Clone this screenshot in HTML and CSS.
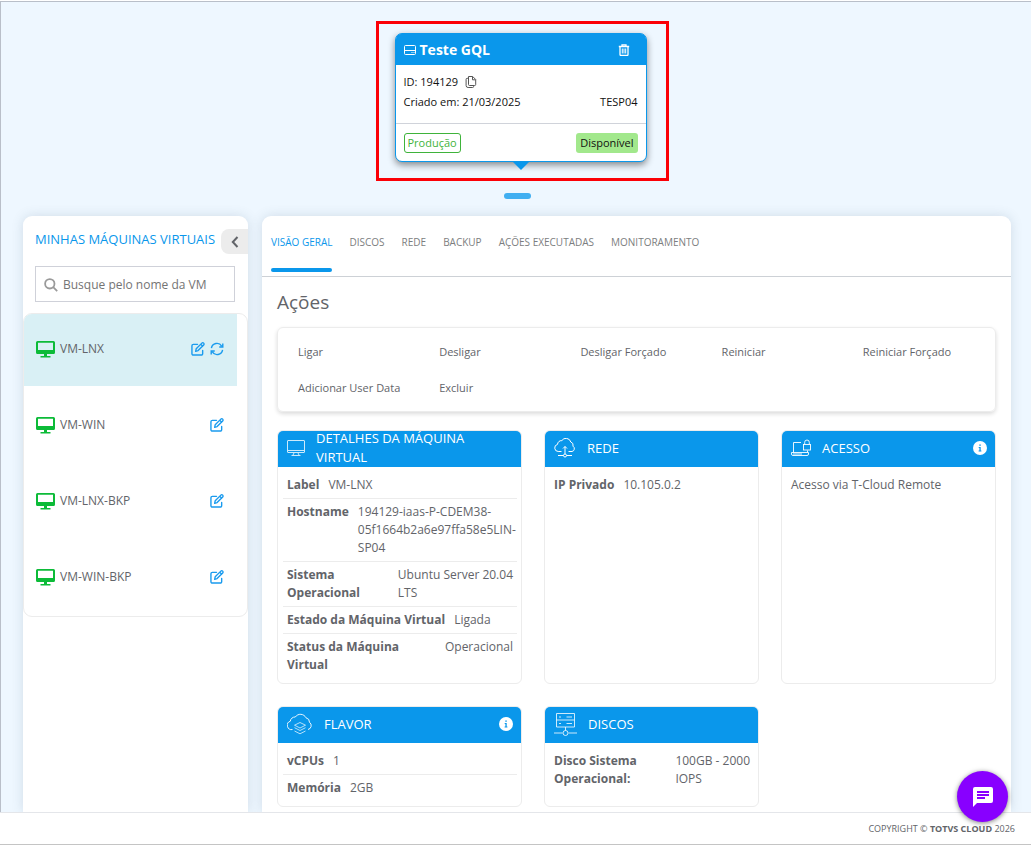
FILE: index.html
```html
<!DOCTYPE html>
<html lang="pt-BR">
<head>
<meta charset="utf-8">
<meta name="viewport" content="width=device-width, initial-scale=1">
<title>TOTVS Cloud</title>
<link rel="stylesheet" href="styles.css">
</head>
<body>
<svg class="defs" aria-hidden="true">
  <symbol id="monitor" viewBox="0 0 19 17"><path fill="currentColor" fill-rule="evenodd" d="M1.5 0h16A1.500 1.500 0 0 1 19 1.500v10a1.500 1.500 0 0 1-1.500 1.500H11v2h3.500v1.500h-10V15H8v-2H1.500A1.500 1.500 0 0 1 0 11.500v-10A1.500 1.500 0 0 1 1.500 0zM2 1.800v7.200h15V1.800z"/></symbol>
  <symbol id="edit" viewBox="0 0 15 15"><path fill="none" stroke="currentColor" stroke-width="1.500" stroke-linecap="round" stroke-linejoin="round" d="M7 2.500H2.500a1.500 1.500 0 0 0-1.500 1.500v8.500A1.500 1.500 0 0 0 2.500 14H11a1.500 1.500 0 0 0 1.500-1.500V9M5 10l.6-2.800 6-6a1.300 1.300 0 0 1 2 2l-6 6zM10.500 2.500l2 2"/></symbol>
  <symbol id="info" viewBox="0 0 14 14"><circle cx="7" cy="7" r="7" fill="#fff"/><path fill="#0a97eb" d="M6.300 3.500h1.500v1.300H6.300zM5.700 6h2v3.400h.7v1H5.600v-1h.8V7h-.7z"/></symbol>
</svg>
<main class="page">
  <section class="hero">
    <div class="highlight">
      <article class="project">
        <header class="project-head">
          <svg class="i12" viewBox="0 0 12 12" fill="none" stroke="currentColor"><rect x=".5" y="1.500" width="11" height="9" rx="1"/><path d="M.5 6.500h11M7.500 8.500h1M9.500 8.500h1"/></svg>
          <h1>Teste GQL</h1>
          <button class="icon-btn trash" aria-label="Excluir projeto"><svg class="i12" viewBox="0 0 12 12" fill="none" stroke="currentColor"><path stroke-width="1.300" d="M.8 2.500h10.400M4 2.300V.8h4v1.500M2 2.700v7.800a1 1 0 0 0 1 1h6a1 1 0 0 0 1-1V2.700"/><path d="M4.300 4.500v5M6 4.500v5M7.700 4.500v5"/></svg></button>
        </header>
        <div class="project-body">
          <div class="line"><span>ID: 194129</span><button class="icon-btn copy" aria-label="Copiar ID"><svg class="i12" viewBox="0 0 12 12" fill="none" stroke="currentColor"><path d="M3.500.5h4.200l3 3v5a1 1 0 0 1-1 1H4.500a1 1 0 0 1-1-1zM7.500.8v3h3M3.300 2.300H2.100a1 1 0 0 0-1 1v6.200a2 2 0 0 0 2 2h4.500a1 1 0 0 0 1-1v-.8"/></svg></button></div>
          <div class="line spread"><span>Criado em: 21/03/2025</span><span>TESP04</span></div>
        </div>
        <footer class="project-foot"><span class="tag outline">Produção</span><span class="tag solid">Disponível</span></footer>
      </article>
    </div>
    <span class="pager"></span>
  </section>

  <div class="workspace">
    <aside class="sidebar">
      <div class="side-head">
        <h2>MINHAS MÁQUINAS VIRTUAIS</h2>
        <button class="collapse" aria-label="Recolher"><svg viewBox="0 0 8 12" fill="none" stroke="currentColor" stroke-width="2"><path d="M6.500 1L1.800 6l4.700 5"/></svg></button>
      </div>
      <label class="search">
        <svg viewBox="0 0 14 14" fill="none" stroke="currentColor" stroke-width="1.800"><circle cx="5.800" cy="5.800" r="4.700"/><path d="M9.200 9.200l4 4"/></svg>
        <input type="text" placeholder="Busque pelo nome da VM" aria-label="Busque pelo nome da VM">
      </label>
      <ul class="vms">
        <li class="vm active"><svg class="mon"><use href="#monitor"/></svg><span>VM-LNX</span><button class="icon-btn" aria-label="Editar"><svg class="ed"><use href="#edit"/></svg></button><button class="icon-btn" aria-label="Atualizar"><svg class="ed" viewBox="0 0 15 15" fill="none" stroke="currentColor" stroke-width="1.500"><path d="M1.500 6.500a6 6 0 0 1 11-2.200M13.700 1.500v3.800H9.900M13.500 8.500a6 6 0 0 1-11 2.200M1.300 13.500V9.700h3.800"/></svg></button></li>
        <li class="vm"><svg class="mon"><use href="#monitor"/></svg><span>VM-WIN</span><button class="icon-btn" aria-label="Editar"><svg class="ed"><use href="#edit"/></svg></button></li>
        <li class="vm"><svg class="mon"><use href="#monitor"/></svg><span>VM-LNX-BKP</span><button class="icon-btn" aria-label="Editar"><svg class="ed"><use href="#edit"/></svg></button></li>
        <li class="vm"><svg class="mon"><use href="#monitor"/></svg><span>VM-WIN-BKP</span><button class="icon-btn" aria-label="Editar"><svg class="ed"><use href="#edit"/></svg></button></li>
      </ul>
    </aside>

    <section class="content">
      <nav class="tabs">
        <a href="#geral" class="current">VISÃO GERAL</a><a href="#discos">DISCOS</a><a href="#rede">REDE</a><a href="#backup">BACKUP</a><a href="#acoes">AÇÕES EXECUTADAS</a><a href="#monitoramento">MONITORAMENTO</a>
      </nav>
      <div class="overview">
        <h2>Ações</h2>
        <div class="actions">
          <button>Ligar</button><button>Desligar</button><button>Desligar Forçado</button><button>Reiniciar</button><button>Reiniciar Forçado</button><button>Adicionar User Data</button><button>Excluir</button>
        </div>
        <div class="cards">
          <article class="card">
            <header><svg width="18" height="18" viewBox="0 0 18 18" fill="none" stroke="currentColor" stroke-width=".8"><rect x=".5" y="1.500" width="17" height="12" rx=".5"/><path d="M1 11.500h16M7 14l-1 2M11 14l1 2M4.500 16.500h9"/></svg><h3>DETALHES DA MÁQUINA VIRTUAL</h3></header>
            <dl>
              <div><dt>Label</dt><dd>VM-LNX</dd></div>
              <div><dt>Hostname</dt><dd>194129-iaas-P-CDEM38-05f1664b2a6e97ffa58e5LIN-SP04</dd></div>
              <div><dt>Sistema Operacional</dt><dd><span class="keep">Ubuntu Server 20.04</span> LTS</dd></div>
              <div><dt>Estado da Máquina Virtual</dt><dd>Ligada</dd></div>
              <div><dt>Status da Máquina Virtual</dt><dd>Operacional</dd></div>
            </dl>
          </article>
          <article class="card">
            <header><svg width="22" height="20" viewBox="0 0 22 20" fill="none" stroke="currentColor"><path d="M7.500 13.500H4.200a3.600 3.600 0 0 1-.7-7.100 4 4 0 0 1 4.300-3.800A5 5 0 0 1 16.800 4a3.500 3.500 0 0 1 2.200 4.200 2.900 2.900 0 0 1-1 5.300h-3.500M11 8.500v7.500M9 10.500l2-2 2 2M4 17.500h5.500M12.500 17.500H18"/><circle cx="11" cy="17.500" r="1.500"/></svg><h3>REDE</h3></header>
            <dl><div><dt>IP Privado</dt><dd>10.105.0.2</dd></div></dl>
          </article>
          <article class="card">
            <header><svg width="20" height="18" viewBox="0 0 20 18" fill="none" stroke="currentColor" stroke-width=".9"><path d="M10 3.500H2.500v10M16.500 11.500v2M.5 13.500h17v1.500q0 1.500-1.500 1.500H2q-1.500 0-1.500-1.500zM2 15h9"/><rect x="12.500" y="5.500" width="7" height="5.500"/><path d="M13.700 5.500V3.300a2.300 2.300 0 0 1 4.600 0v2.200"/></svg><h3>ACESSO</h3><button class="icon-btn info" aria-label="Informações"><svg><use href="#info"/></svg></button></header>
            <p>Acesso via T-Cloud Remote</p>
          </article>
          <article class="card">
            <header><svg width="26" height="22" viewBox="0 0 26 22" fill="none" stroke="currentColor" stroke-width=".9"><path d="M5.500 16.500A4.300 4.300 0 0 1 3.300 8.200 4.700 4.700 0 0 1 8.300 4 6.200 6.200 0 0 1 19 4.800a4.500 4.500 0 0 1 3.500 4.500 4 4 0 0 1-1.500 7.200"/><path stroke-width=".7" d="M13 9.500l5.500 2.700-5.500 2.800-5.500-2.800zM7.500 14.700l5.500 2.800 5.500-2.800M7.500 18l5.500 2.800L18.500 18"/></svg><h3>FLAVOR</h3><button class="icon-btn info" aria-label="Informações"><svg><use href="#info"/></svg></button></header>
            <dl><div><dt>vCPUs</dt><dd>1</dd></div><div><dt>Memória</dt><dd>2GB</dd></div></dl>
          </article>
          <article class="card">
            <header><svg width="23" height="24" viewBox="0 0 23 24" fill="none" stroke="currentColor" stroke-width=".8"><path d="M2.500 1.500h18v13.500h-18zM2.500 8h18M5 5h2M12.500 5H18M5 11.500h2M12.500 11.500H18M11.500 15v3.500M0 21h8.500M14.500 21H23"/><circle cx="11.500" cy="21" r="2.500"/></svg><h3>DISCOS</h3></header>
            <dl><div><dt>Disco Sistema Operacional:</dt><dd><span class="keep">100GB - 2000</span> IOPS</dd></div></dl>
          </article>
        </div>
      </div>
    </section>
  </div>
</main>
<footer class="site-foot">COPYRIGHT © <b>TOTVS CLOUD</b> 2026</footer>
<button class="chat" aria-label="Chat"><svg viewBox="0 0 20 20"><path fill="#fff" d="M2 0h16a2 2 0 0 1 2 2v12a2 2 0 0 1-2 2H4l-4 4V2a2 2 0 0 1 2-2z"/><path stroke="#8800ff" stroke-width="1.800" d="M4 5h12M4 8h12M4 11h8"/></svg></button>
</body>
</html>
```

FILE: styles.css
```css
* { box-sizing: border-box; }
body {
  margin: 0;
  height: 100vh;
  padding: 1px 0 3px;
  display: flex;
  flex-direction: column;
  background: #fff;
  color: #626469;
  font: 12px/18px "Open Sans", sans-serif;
}
h1, h2, h3, ul, dl, dd, p { margin: 0; padding: 0; font-weight: 400; }
button { font: inherit; color: inherit; border: 0; background: none; padding: 0; cursor: pointer; }
svg { display: block; flex: none; }
.defs { position: absolute; width: 0; height: 0; }
.icon-btn { display: block; flex: none; }
.i12 { width: 12px; height: 12px; }
.keep { white-space: nowrap; }

.page {
  flex: 1;
  min-height: 0;
  overflow: hidden;
  display: flex;
  flex-direction: column;
  border-top: 1px solid #b9bfc9;
  border-left: 1px solid #b9bfc9;
  background: #eef7ff;
}

/* Project card */
.hero {
  flex: none;
  display: flex;
  flex-direction: column;
  align-items: center;
  gap: 12px;
  padding: 19px 0 17px;
}
.highlight { border: 3px solid #fb0007; padding: 9px 19px 16px 16px; margin-left: 12px; }
.project {
  position: relative;
  width: 252px;
  border: 1px solid #0a97eb;
  border-radius: 7px;
  background: #fff;
  color: #111;
  font-size: 11px;
  box-shadow: 0 3px 7px rgba(0, 0, 0, .45);
}
.project::after {
  content: "";
  position: absolute;
  top: 100%;
  left: 50%;
  margin-left: -9px;
  border: 9px solid transparent;
  border-bottom: 0;
  border-top-color: #0a97eb;
}
.project-head {
  display: flex;
  align-items: center;
  gap: 4px;
  height: 31px;
  padding: 0 16px 0 8px;
  border-radius: 5px 5px 0 0;
  background: #0a97eb;
  color: #fff;
}
.project-head h1 { font-size: 14px; font-weight: 700; }
.trash { margin-left: auto; }
.project-body { padding: 7px 8px 11px; border-bottom: 1px solid #d0d3da; }
.line { display: flex; align-items: center; gap: 7px; height: 20px; }
.spread { justify-content: space-between; }
.copy { color: #555; }
.project-foot { display: flex; justify-content: space-between; padding: 9px 8px 8px; }
.tag { height: 20px; padding: 0 4px; line-height: 19px; border-radius: 3px; }
.outline { padding: 0 3px; border: 1px solid #3fb33b; line-height: 17px; color: #3fb33b; }
.solid { background: #a2e88c; }
.pager { width: 27px; height: 6px; margin-left: 3px; border-radius: 3px; background: #41aff1; }

/* Virtual machines list */
.workspace {
  flex: 1;
  min-height: 0;
  display: flex;
  gap: 14px;
  padding: 0 20px 0 22px;
}
.sidebar, .content {
  background: #fff;
  border-radius: 9px 9px 0 0;
  box-shadow: 0 0 12px rgba(60, 90, 110, .17);
}
.sidebar { flex: 0 0 225px; }
.side-head { display: flex; align-items: center; justify-content: space-between; padding: 13px 0 12px 12px; }
.side-head h2 { color: #0a97eb; font-size: 13px; line-height: 20px; margin-bottom: 5px; white-space: nowrap; }
.collapse {
  flex: none;
  width: 27px;
  height: 25px;
  display: grid;
  place-items: center;
  border-radius: 8px 0 0 8px;
  background: #ececec;
}
.collapse svg { width: 8px; height: 12px; }
.search {
  display: flex;
  align-items: center;
  gap: 5px;
  height: 36px;
  margin: 0 13px 11px 12px;
  padding: 1px 8px 0;
  border: 1px solid #cfd1d9;
  color: #9a9a9a;
}
.search svg { width: 14px; height: 14px; }
.search input { flex: 1; min-width: 0; padding: 0; border: 0; outline: 0; background: none; font: inherit; }
.search input::placeholder { color: #747474; opacity: 1; }
.vms {
  display: flex;
  flex-direction: column;
  gap: 4px;
  padding: 0 10px 2px 0;
  border: 1px solid #ececec;
  border-radius: 9px;
  overflow: hidden;
  list-style: none;
}
.vm { display: flex; align-items: center; gap: 5px; height: 72px; padding: 0 13px 2px 12px; }
.vm span { flex: 1; }
.vm.active { background: #d9f0f5; }
.vm .icon-btn { color: #1a9bee; }
.mon { width: 19px; height: 17px; color: #0cbb38; }
.ed { width: 14px; height: 14px; }

/* Main panel */
.content { flex: 1; min-width: 0; }
.tabs {
  display: flex;
  gap: 17px;
  height: 61px;
  padding: 0 9px 4px;
  border-bottom: 1px solid #cdd1d6;
  font-size: 10px;
}
.tabs a { padding-top: 17px; color: #7c7e80; text-decoration: none; white-space: nowrap; }
.tabs .current { position: relative; color: #0a97eb; }
.tabs .current::after {
  content: "";
  position: absolute;
  left: 0;
  right: 0;
  bottom: 0;
  height: 4px;
  border-radius: 2px;
  background: #0a97eb;
}
.overview { padding: 13px 15px 0; }
.overview h2 { font-size: 19px; line-height: 24px; }
.actions {
  display: grid;
  grid-template-columns: repeat(5, 1fr);
  margin: 13px 0 18px;
  padding: 6px 5px 5px 6px;
  border: 1px solid #ececec;
  border-radius: 6px;
  box-shadow: 0 2px 4px rgba(0, 0, 0, .14);
  font-size: 11px;
}
.actions button { height: 36px; padding: 0 14px; text-align: left; white-space: nowrap; }
.cards { display: grid; grid-template-columns: 245fr 215fr 215fr; gap: 22px; }
.card { min-width: 0; border: 1px solid #ececec; border-radius: 6px; padding-bottom: 5px; }
.card header {
  display: flex;
  align-items: center;
  gap: 11px;
  height: 36px;
  padding: 0 8px 2px 9px;
  border-radius: 5px 5px 0 0;
  background: #0a97eb;
  color: #fff;
}
.card h3 { font-size: 13px; line-height: 19px; }
.info { margin-left: auto; }
.info svg { width: 14px; height: 14px; }
.card dl { padding: 5px 4px 0 5px; }
.card dl div { display: flex; gap: 9px; padding: 4px; }
.card dl div + div { border-top: 1px solid #ececec; }
.card dt { font-weight: 700; }
.card p { padding: 9px; }

.site-foot {
  flex: none;
  padding: 7px 16px 6px;
  border-top: 1px solid #e4e6ea;
  border-bottom: 1px solid #c4c4c4;
  text-align: right;
  font-size: 9px;
}
.chat {
  position: fixed;
  right: 23px;
  bottom: 26px;
  width: 51px;
  height: 51px;
  display: grid;
  place-items: center;
  border-radius: 50%;
  background: #8800ff;
  box-shadow: 0 1px 5px rgba(0, 0, 0, .5);
}
.chat svg { width: 20px; height: 20px; }
```
